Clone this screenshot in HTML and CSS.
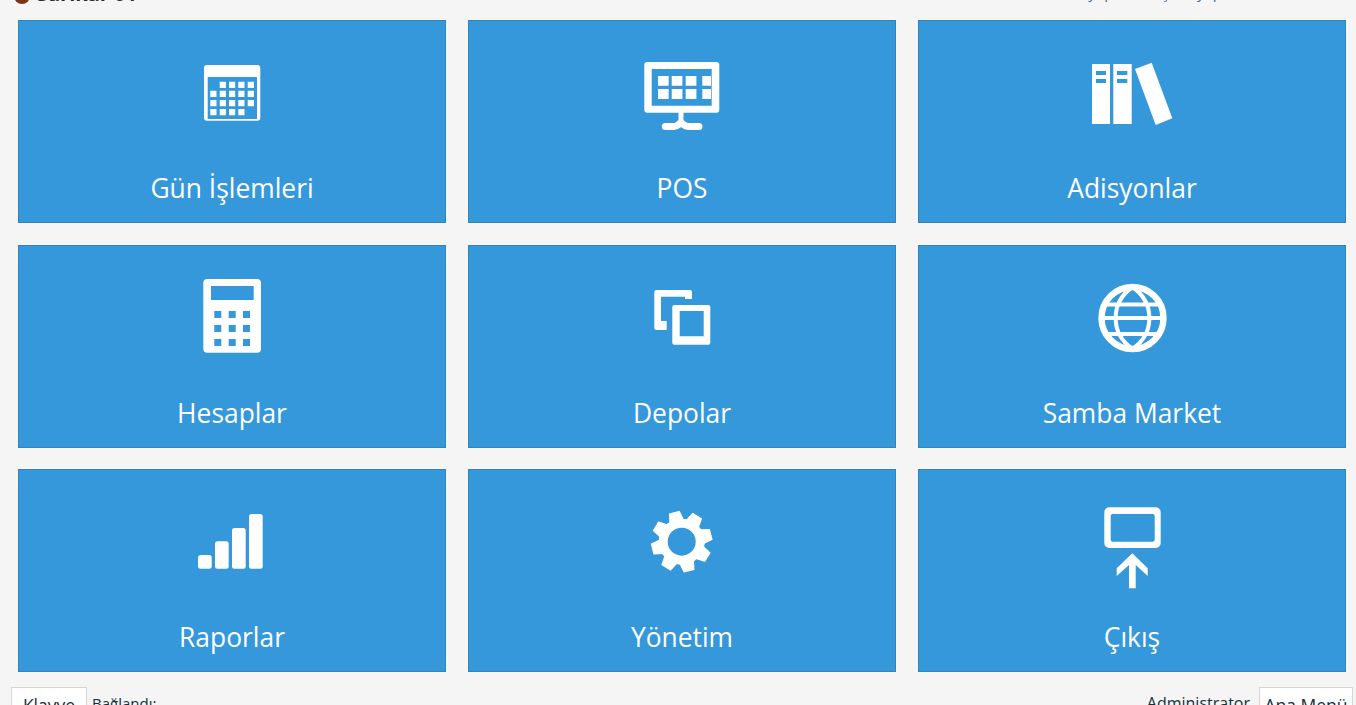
FILE: index.html
```html
<!DOCTYPE html>
<html>
<head>
    <link rel="stylesheet" href="styles.css">
</head>
<body>
    <div class="topbar">
        <div class="brand">
            <span class="brand-dot"></span>
            <span class="brand-name">Sarıkar 01</span>
        </div>
        <div class="top-links">yapılandır Şifre yap</div>
    </div>

    <div class="tiles">
        <a class="tile">
            <svg class="tile-icon" viewBox="0 0 100 90">
                <path fill-rule="evenodd" d="M25 15h50.300a3 3 0 0 1 3 3v49.700a3 3 0 0 1-3 3H25a3 3 0 0 1-3-3V18a3 3 0 0 1 3-3zM25.700 27v42H75V27z"/>
                <path d="M37.700 31.700h6.200v6.200h-6.200zM47 31.700h6.200v6.200H47zM56.300 31.700h6.200v6.200h-6.200zM65.700 31.700h6.200v6.200h-6.200z"/>
                <path d="M28.300 40.700h6.200v6.200h-6.200zM37.700 40.700h6.200v6.200h-6.200zM47 40.700h6.200v6.200H47zM56.300 40.700h6.200v6.200h-6.200zM65.700 40.700h6.200v6.200h-6.200z"/>
                <path d="M28.300 50h6.200v6.200h-6.200zM37.700 50h6.200v6.200h-6.200zM47 50h6.200v6.200H47zM56.300 50h6.200v6.200h-6.200zM65.700 50h6.200v6.200h-6.200z"/>
                <path d="M28.300 59h6.200v6.200h-6.200zM37.700 59h6.200v6.200h-6.200zM47 59h6.200v6.200H47zM56.300 59h6.200v6.200h-6.200z"/>
            </svg>
            <span class="tile-label">Gün İşlemleri</span>
        </a>
        <a class="tile">
            <svg class="tile-icon" viewBox="0 0 100 90">
                <path fill-rule="evenodd" d="M15.300 12h69a3 3 0 0 1 3 3v44.700a3 3 0 0 1-3 3h-69a3 3 0 0 1-3-3V15a3 3 0 0 1 3-3zM19.700 19v36.700h60V19z"/>
                <path d="M26 26h10.700v9.700H26zM39.700 26h10.700v9.700H39.700zM53.700 26h10.700v9.700H53.700zM70.300 26H79v9.700h-8.700z"/>
                <path d="M26 39h10.700v10H26zM39.700 39h10.700v10H39.700zM53.700 39h10.700v10H53.700zM70.300 39H79v10h-8.700z"/>
                <path d="M46.500 62h5v9h-5z"/>
                <path class="icon-line" stroke-width="7" stroke-linecap="round" d="M33.300 76.500H42c4 0 5-3.500 7-3.500s3 3.500 7 3.500h11"/>
            </svg>
            <span class="tile-label">POS</span>
        </a>
        <a class="tile">
            <svg class="tile-icon" viewBox="0 0 100 90">
                <path fill-rule="evenodd" d="M10 14h18v60H10zM14 21v4h10v-4zM14 29v4h10v-4z"/>
                <path fill-rule="evenodd" d="M31.300 14h18.400v60H31.300zM35 21v4h10.300v-4zM35 29v4h10.300v-4z"/>
                <path d="M53 19l16.700-6.300L90.300 68.300 73.700 75z"/>
            </svg>
            <span class="tile-label">Adisyonlar</span>
        </a>
        <a class="tile">
            <svg class="tile-icon" viewBox="0 0 100 90">
                <path fill-rule="evenodd" d="M25.300 4H75a4 4 0 0 1 4 4v65.700a4 4 0 0 1-4 4H25.300a4 4 0 0 1-4-4V8a4 4 0 0 1 4-4zM29 11v14h42.700V11zM32.300 36v7h7v-7zM46.700 36v7h7v-7zM61 36v7h7v-7zM32.300 50v7h7v-7zM46.700 50v7h7v-7zM61 50v7h7v-7zM32.300 64v7h7v-7zM46.700 64v7h7v-7zM61 64v7h7v-7z"/>
            </svg>
            <span class="tile-label">Hesaplar</span>
        </a>
        <a class="tile">
            <svg class="tile-icon" viewBox="0 0 100 90">
                <path d="M24.300 15H58a2 2 0 0 1 2 2v7h-7v-2.300H29V46h5.700v9H24.300a2 2 0 0 1-2-2V17a2 2 0 0 1 2-2z"/>
                <path fill-rule="evenodd" d="M42.300 30h34a2 2 0 0 1 2 2v35.700a2 2 0 0 1-2 2h-34a2 2 0 0 1-2-2V32a2 2 0 0 1 2-2zM47.700 36v25.300h24V36z"/>
            </svg>
            <span class="tile-label">Depolar</span>
        </a>
        <a class="tile">
            <svg class="tile-icon" viewBox="0 0 100 90">
                <circle class="icon-line" cx="50.500" cy="43" r="31" stroke-width="6.400"/>
                <path class="icon-line" stroke-width="4" d="M50.500 12C28 28 28 58 50.500 74C73 58 73 28 50.500 12zM21 29.500h59M19 43h63M21 59h59"/>
            </svg>
            <span class="tile-label">Samba Market</span>
        </a>
        <a class="tile">
            <svg class="tile-icon" viewBox="0 0 100 90">
                <rect x="16" y="56" width="13.700" height="13.700" rx="2.500"/>
                <rect x="33" y="42.300" width="13.700" height="27.400" rx="2.500"/>
                <rect x="50" y="29" width="13.700" height="40.700" rx="2.500"/>
                <rect x="67" y="15" width="13.700" height="54.700" rx="2.500"/>
            </svg>
            <span class="tile-label">Raporlar</span>
        </a>
        <a class="tile">
            <svg class="tile-icon" viewBox="0 0 100 90">
                <g transform="translate(49.700 42.700)">
                    <circle class="icon-line" r="18.500" stroke-width="9"/>
                    <path transform="rotate(-14)" d="M-7.500-21l2-9.500h11l2 9.500z"/>
                    <path transform="rotate(31)" d="M-7.500-21l2-9.500h11l2 9.500z"/>
                    <path transform="rotate(76)" d="M-7.500-21l2-9.500h11l2 9.500z"/>
                    <path transform="rotate(121)" d="M-7.500-21l2-9.500h11l2 9.500z"/>
                    <path transform="rotate(166)" d="M-7.500-21l2-9.500h11l2 9.500z"/>
                    <path transform="rotate(211)" d="M-7.500-21l2-9.500h11l2 9.500z"/>
                    <path transform="rotate(256)" d="M-7.500-21l2-9.500h11l2 9.500z"/>
                    <path transform="rotate(301)" d="M-7.500-21l2-9.500h11l2 9.500z"/>
                </g>
            </svg>
            <span class="tile-label">Yönetim</span>
        </a>
        <a class="tile">
            <svg class="tile-icon" viewBox="0 0 100 90">
                <path fill-rule="evenodd" d="M27.300 8.300h46.400a5 5 0 0 1 5 5V44a5 5 0 0 1-5 5H27.300a5 5 0 0 1-5-5V13.300a5 5 0 0 1 5-5zM30.700 15a2 2 0 0 0-2 2v23.700a2 2 0 0 0 2 2h40a2 2 0 0 0 2-2V17a2 2 0 0 0-2-2z"/>
                <path d="M50.300 54.300l15.400 15V77L53.700 66v23.300H47V66L34.700 77v-7.700z"/>
            </svg>
            <span class="tile-label">Çıkış</span>
        </a>
    </div>

    <div class="bottombar">
        <div class="bottom-left">
            <button class="plain-button keyboard-button">Klavye</button>
            <span class="status">Bağlandı:</span>
        </div>
        <div class="bottom-right">
            <span class="user-name">Administrator</span>
            <button class="plain-button menu-button">Ana Menü</button>
        </div>
    </div>
</body>
</html>
```

FILE: styles.css
```css
html,
body {
    height: 705px;
    overflow: hidden;
}

body {
    margin: 0;
    background-color: #f5f5f5;
    font-family: "Open Sans", "Noto Sans", sans-serif;
    color: #16303a;
    display: flex;
    flex-direction: column;
}

/* Top bar is scrolled mostly out of view */
.topbar {
    height: 20px;
    flex-shrink: 0;
    display: flex;
    justify-content: space-between;
    overflow: hidden;
    padding: 0 134px 0 14px;
}

.brand {
    display: flex;
    align-items: center;
    gap: 7px;
    height: 20px;
    margin-top: -14px;
}

.brand-dot {
    width: 16px;
    height: 16px;
    border-radius: 50%;
    background-color: #7c3414;
}

.brand-name {
    font-size: 20px;
    font-weight: 700;
    color: #2a2a2a;
    margin-top: -5px;
}

.top-links {
    font-size: 15px;
    line-height: 18px;
    margin-top: -17px;
    color: #3f6a96;
}

.tiles {
    height: 652px;
    flex-shrink: 0;
    box-sizing: border-box;
    padding: 0 10px 0 18px;
    display: grid;
    grid-template-columns: repeat(3, 1fr);
    grid-template-rows: repeat(3, 203px);
    gap: 21.5px 22px;
}

.tile {
    background-color: #3498db;
    border: 1px solid #2e86c1;
    display: flex;
    flex-direction: column;
    align-items: center;
    padding-top: 29px;
    cursor: pointer;
}

.tile-icon {
    width: 100px;
    height: 90px;
    fill: #fff;
    flex-shrink: 0;
}

.tile-label {
    margin-top: 28px;
    font-size: 26.4px;
    line-height: 40px;
    color: #fff;
}

.icon-line {
    fill: none;
    stroke: #fff;
}

.bottombar {
    flex-shrink: 0;
    display: flex;
    justify-content: space-between;
    align-items: flex-start;
    padding: 15px 3px 0 11px;
}

.bottom-left,
.bottom-right {
    display: flex;
    align-items: flex-start;
}

.plain-button {
    background-color: #fff;
    border: 1px solid #d5d5d5;
    font-family: inherit;
    font-size: 17.5px;
    color: #16303a;
    height: 36px;
    padding: 0;
}

.keyboard-button {
    width: 76px;
}

.menu-button {
    width: 94px;
}

.status {
    margin-left: 5px;
    padding-top: 6px;
    font-size: 15px;
}

.user-name {
    margin-right: 9px;
    padding-top: 5px;
    font-size: 16px;
}
```
